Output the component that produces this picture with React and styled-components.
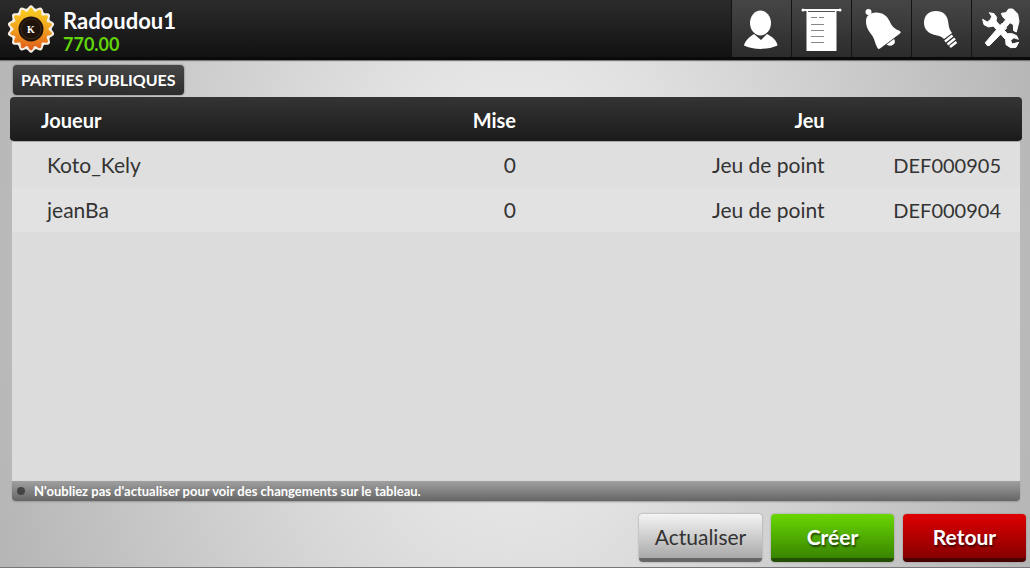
import React from "react";
import styled, { createGlobalStyle } from "styled-components";

const games = [
  { player: "Koto_Kely", bet: 0, game: "Jeu de point", code: "DEF000905" },
  { player: "jeanBa", bet: 0, game: "Jeu de point", code: "DEF000904" },
];

// wavy outline of the badge
const badgePath = (radius, depth) => {
  const points = [];
  for (let i = 0; i < 140; i++) {
    const a = (i / 140) * Math.PI * 2 - Math.PI / 2;
    const r = radius + depth * Math.cos(14 * (a + Math.PI / 2));
    points.push(
      `${(24 + r * Math.cos(a)).toFixed(2)} ${(24 + r * Math.sin(a)).toFixed(2)}`
    );
  }
  return `M${points.join("L")}Z`;
};

function Badge() {
  return (
    <svg width="48" height="48" viewBox="0 0 48 48" aria-hidden="true">
      <defs>
        <linearGradient id="sun" x1="0" y1="0" x2="0" y2="1">
          <stop offset="0" stopColor="#f8cf20" />
          <stop offset="0.5" stopColor="#f2a21e" />
          <stop offset="1" stopColor="#de5a1c" />
        </linearGradient>
      </defs>
      <path d={badgePath(22.2, 1.5)} fill="#f6efe6" />
      <path d={badgePath(19.4, 2)} fill="url(#sun)" />
      <circle cx="24" cy="24" r="12.5" fill="#20130c" />
      <circle cx="24" cy="24" r="10" fill="none" stroke="#3d2a1c" />
      <text
        x="24"
        y="28"
        fill="#fff"
        fontSize="10"
        fontWeight="700"
        fontFamily="Liberation Serif, serif"
        textAnchor="middle"
      >
        K
      </text>
    </svg>
  );
}

function UserIcon() {
  return (
    <Icon viewBox="0 0 60 57">
      <ellipse cx="29.5" cy="23" rx="10.5" ry="12.5" />
      <path d="M23 34L30 40L36 34C42 37 46 41 46.500 45.500C37 50 22 50 13 45.500C14 41 18 37 23 34Z" />
    </Icon>
  );
}

function ScrollIcon() {
  return (
    <Icon viewBox="0 0 60 57">
      <circle cx="12" cy="10" r="1.5" />
      <circle cx="49" cy="10" r="1.5" />
      <path d="M11 9h38v2H11zM15.500 10h30v41h-30z" />
      <path d="M17 11.500h27" stroke="#555" />
      <path
        d="M20 17.500h6M28 17.500h5M20 24.500h13M20 30.500h13M20 36.500h13M20 42.500h13"
        stroke="#888"
      />
    </Icon>
  );
}

function BellIcon() {
  return (
    <Icon viewBox="0 0 60 57">
      <circle cx="17.500" cy="12" r="3" />
      <path d="M15 21C15 16 19 12.500 25 12.500C32 12.500 36 16 38.500 21C41 27 44 29 49 31Q50.500 32.500 49 33.500L29 48.500Q27.500 49.500 26.500 48C24 44 24 40 21.500 36C18 31 15 28 15 21Z" />
      <path d="M35.500 44.500L43 39C46 43 41 48 35.500 44.500Z" />
    </Icon>
  );
}

function BulbIcon() {
  return (
    <Icon viewBox="0 0 60 57">
      <path d="M13 23C13 15 18 11 25 11C32 11 36 15 37 21C38 27 38 29 41 33L33 39C29 35 26 36 21 34C16 32 13 28 13 23Z" />
      <path
        d="M34 41.500L41.500 35.500M36.500 44.500L44 38.500M39 47L45.500 42"
        stroke="#fff"
        strokeWidth="2.500"
      />
    </Icon>
  );
}

function ToolsIcon() {
  return (
    <Icon viewBox="3 0 180 171">
      <g stroke="#fff" strokeWidth="3" strokeLinejoin="round">
        <path d="M58 38L72 41L80 52L78 63L112 101L126 101L140 107L145 118L132 113L122 121L126 132L146 127L138 142L122 143L108 134L107 119L70 78L56 81L42 74L38 58L52 66L62 58L65 49Z" />
        <path d="M46 128L96 70L110 84L58 137Q50 140 46 128Z" />
        <path d="M94 40L108 38L116 27L128 27L143 42L147 64L139 96L131 92L130 74L120 68L108 82L97 72L107 59L98 50Z" />
      </g>
    </Icon>
  );
}

const menu = [
  { label: "Profil", icon: UserIcon },
  { label: "Historique", icon: ScrollIcon },
  { label: "Notifications", icon: BellIcon },
  { label: "Aide", icon: BulbIcon },
  { label: "Options", icon: ToolsIcon },
];

function Header() {
  return (
    <Topbar>
      <Badge />
      <Player>
        <Name>Radoudou1</Name>
        <Credit>770.00</Credit>
      </Player>
      <Menu>
        {menu.map(({ label, icon: MenuIcon }) => (
          <MenuButton key={label} type="button" aria-label={label}>
            <MenuIcon />
          </MenuButton>
        ))}
      </Menu>
    </Topbar>
  );
}

function GamesTable() {
  return (
    <Table>
      <colgroup>
        <col width="30%" />
        <col width="20%" />
        <col width="30.5%" />
        <col width="19.5%" />
      </colgroup>
      <thead>
        <tr>
          <HeadCell>Joueur</HeadCell>
          <HeadCell $right>Mise</HeadCell>
          <HeadCell $right>Jeu</HeadCell>
          <HeadCell as="td" />
        </tr>
      </thead>
      <tbody>
        {games.map((g) => (
          <Row key={g.code}>
            <Cell>{g.player}</Cell>
            <Cell $right>{g.bet}</Cell>
            <Cell $right>{g.game}</Cell>
            <Cell $right $small>
              {g.code}
            </Cell>
          </Row>
        ))}
      </tbody>
    </Table>
  );
}

function App() {
  return (
    <Page>
      <GlobalStyle />
      <Header />
      <Content>
        <Title>PARTIES PUBLIQUES</Title>
        <Panel>
          <GamesTable />
        </Panel>
        <Hint>N'oubliez pas d'actualiser pour voir des changements sur le tableau.</Hint>
      </Content>
      <Actions>
        <Button type="button">Actualiser</Button>
        <Button type="button" $color="green">
          Créer
        </Button>
        <Button type="button" $color="red">
          Retour
        </Button>
      </Actions>
    </Page>
  );
}

export default App;

const GlobalStyle = createGlobalStyle`
  * {
    box-sizing: border-box;
  }

  body {
    margin: 0;
    font-family: Lato, "Noto Sans", sans-serif;
  }
`;

const Page = styled.div`
  display: flex;
  flex-direction: column;
  min-height: 100vh;
  border-bottom: 1px solid #77777b;
  background: radial-gradient(ellipse 54% 150% at 50% 50%, #e8e8e8 20%, #b4b4b4 100%);
`;

const Topbar = styled.header`
  display: flex;
  height: 60px;
  padding-left: 7px;
  align-items: center;
  overflow: hidden;
  border-bottom: 3px solid #0a0a0a;
  background: linear-gradient(#2b2b2b, #121212);
  box-shadow: 0 1px 1px #777;
`;

const Player = styled.div`
  flex: 1;
  padding: 4px 0 0 8px;
`;

const Name = styled.div`
  color: #fff;
  font-size: 22px;
  line-height: 26px;
  font-weight: 700;
`;

const Credit = styled.div`
  color: #62d50c;
  font-size: 18px;
  line-height: 20px;
  font-weight: 700;
`;

const Menu = styled.nav`
  display: flex;
  align-self: stretch;
  margin-right: -1px;
`;

const MenuButton = styled.button`
  width: 60px;
  padding: 0;
  border: 0;
  border-left: 1px solid #141414;
  background: linear-gradient(#464646, #2b2b2b);
  cursor: pointer;
`;

const Icon = styled.svg.attrs({ "aria-hidden": true })`
  display: block;
  width: 60px;
  height: 57px;
  margin-left: -1px;
  fill: #fff;
`;

const Content = styled.main`
  display: flex;
  flex: 1;
  flex-direction: column;
  padding: 5px 10px 0 12px;
`;

const Title = styled.h1`
  align-self: flex-start;
  margin: 0 0 2px 1px;
  padding: 0 8px;
  border-radius: 4px;
  background: linear-gradient(#474747, #2c2c2c);
  box-shadow: 0 0 2px #555;
  color: #fff;
  font-size: 16px;
  line-height: 30px;
  font-weight: 700;
`;

const Panel = styled.section`
  flex: 1;
  background: #dcdcdc;
`;

const Table = styled.table`
  width: calc(100% + 4px);
  margin: 0 -2px;
  table-layout: fixed;
  border-collapse: separate;
  border-spacing: 0;
`;

const HeadCell = styled.th`
  height: 45px;
  padding: 2px 0 0 31px;
  border-bottom: 1px solid #aaa;
  background: linear-gradient(#343434, #1b1b1b) padding-box;
  color: #fff;
  font-size: 20px;
  line-height: 28px;
  font-weight: 700;
  text-align: ${({ $right }) => ($right ? "right" : "left")};

  &:first-child {
    border-radius: 4px 0 0 4px;
  }

  &:last-child {
    border-radius: 0 4px 4px 0;
  }
`;

const Cell = styled.td`
  height: 45px;
  padding: 0;
  color: #333;
  font-size: ${({ $small }) => ($small ? "20px" : "21px")};
  line-height: 28px;
  text-align: ${({ $right }) => ($right ? "right" : "left")};
  background-clip: padding-box;

  &:first-child {
    padding-left: 35px;
    border-left: 2px solid transparent;
  }

  &:last-child {
    padding-right: 19px;
    border-right: 2px solid transparent;
  }
`;

const Row = styled.tr`
  ${Cell} {
    background-color: #dfdfdf;
  }

  &:nth-child(even) ${Cell} {
    background-color: #e2e2e2;
  }
`;

const Hint = styled.p`
  display: flex;
  align-items: center;
  gap: 9px;
  margin: 0;
  padding: 0 5px;
  border-radius: 0 0 4px 4px;
  background: linear-gradient(#a0a0a0, #656565);
  box-shadow: 0 1px 2px #999;
  color: #fff;
  font-size: 13px;
  line-height: 20px;
  font-weight: 700;

  &::before {
    content: "";
    width: 8px;
    height: 8px;
    border-radius: 50%;
    background: #444;
  }
`;

const Actions = styled.footer`
  display: flex;
  justify-content: flex-end;
  gap: 9px;
  padding: 13px 4px 5px;
`;

const colors = {
  grey: { top: "#f4f4f4", bottom: "#a9a9a9", edge: "#666", text: "#333" },
  green: { top: "#69d703", bottom: "#398500", edge: "#225000", text: "#fff" },
  red: { top: "#df0000", bottom: "#870000", edge: "#4b0000", text: "#fff" },
};

const Button = styled.button`
  width: 123px;
  height: 48px;
  padding: 0;
  border: 0;
  border-bottom: 4px solid ${({ $color = "grey" }) => colors[$color].edge};
  border-radius: 4px;
  background: ${({ $color = "grey" }) =>
    `linear-gradient(${colors[$color].top}, ${colors[$color].bottom})`};
  box-shadow: 0 0 2px #888;
  color: ${({ $color = "grey" }) => colors[$color].text};
  font-family: inherit;
  font-size: 21px;
  font-weight: ${({ $color }) => ($color ? 700 : 400)};
  text-shadow: ${({ $color }) => ($color ? "1px 2px 2px rgba(0, 0, 0, 0.6)" : "none")};
  cursor: pointer;
`;
